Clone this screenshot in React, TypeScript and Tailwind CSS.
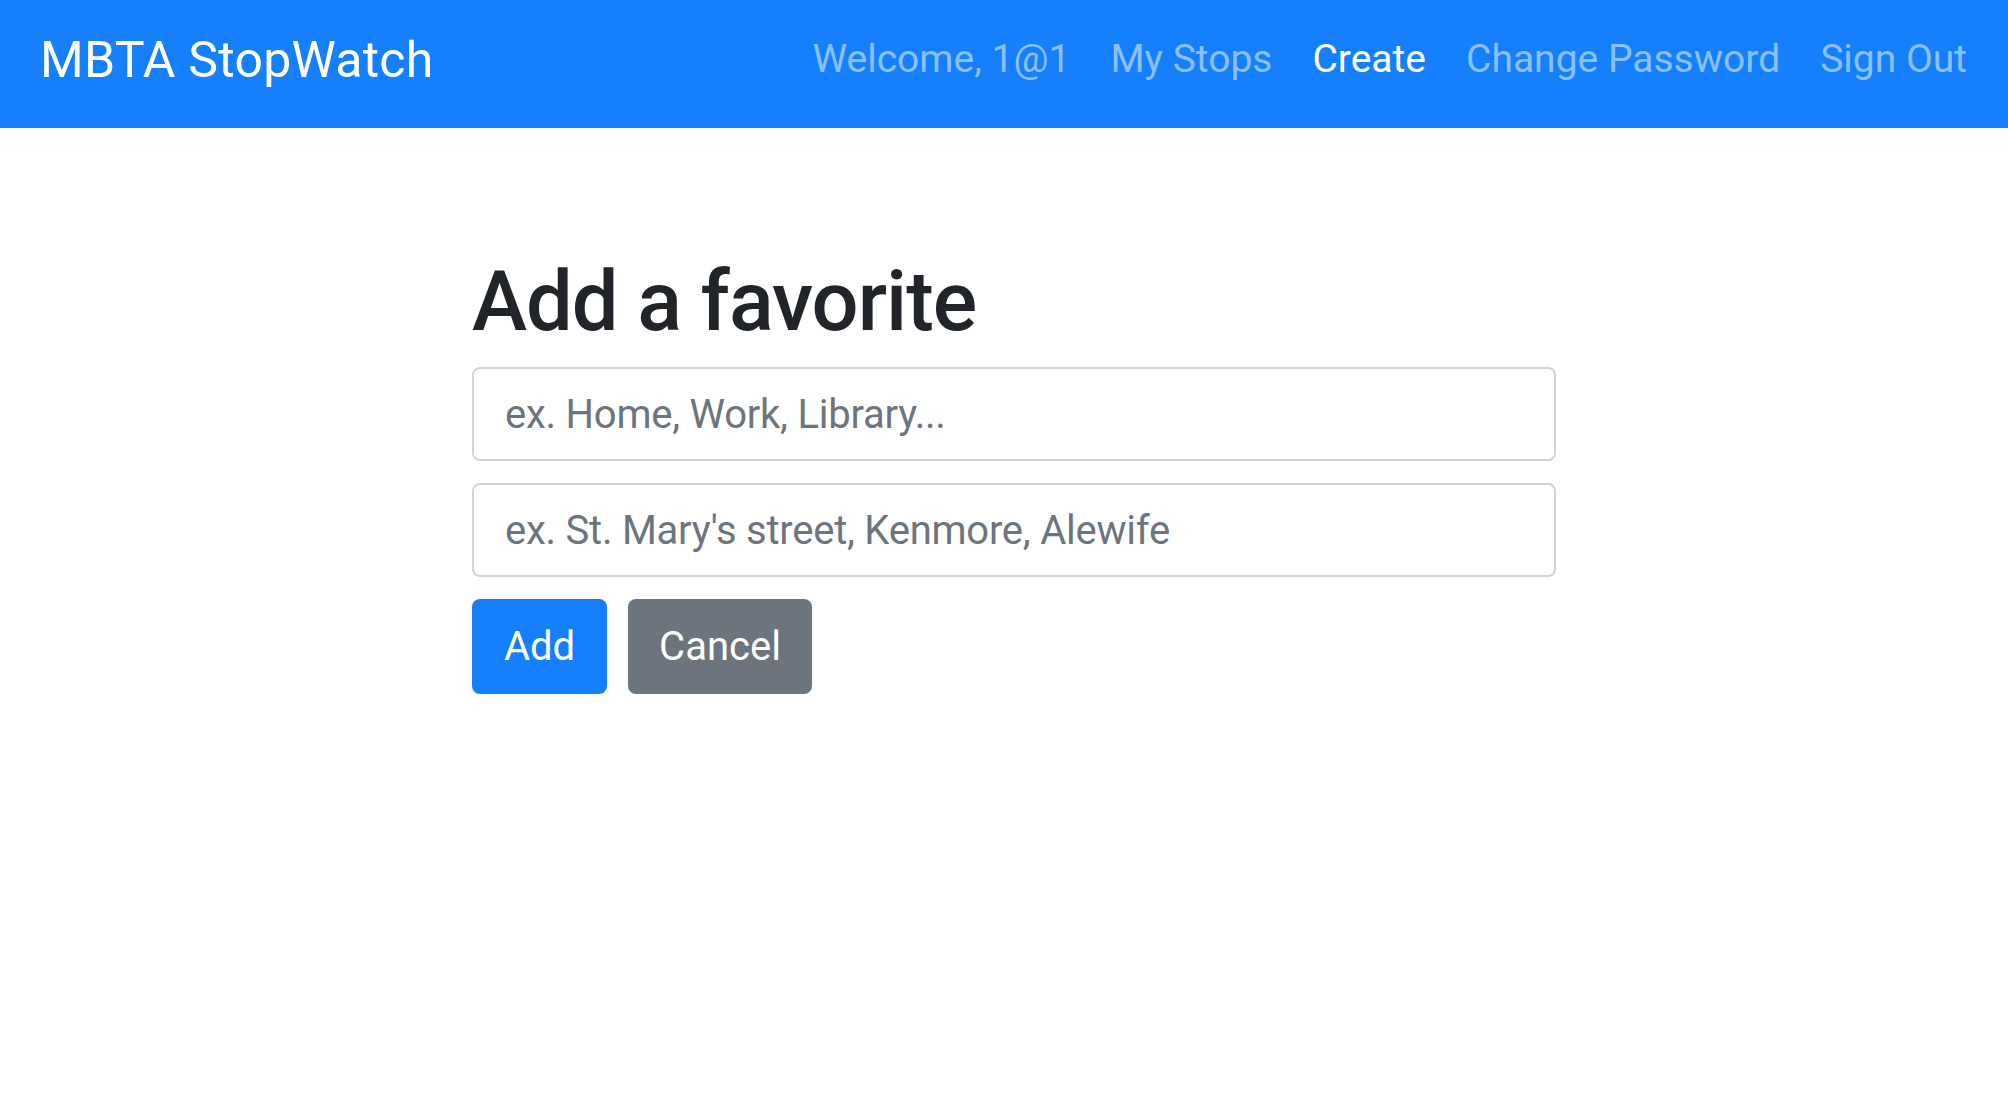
import { useState } from "react";

const links = [
  { label: "Welcome, 1@1", active: false },
  { label: "My Stops", active: false },
  { label: "Create", active: true },
  { label: "Change Password", active: false },
  { label: "Sign Out", active: false },
];

const App: React.FC = () => {
  const [form, setForm] = useState({ name: "", stop: "" });

  const handleChange = (e: React.ChangeEvent<HTMLInputElement>) => {
    const { name, value } = e.target;
    setForm({ ...form, [name]: value });
  };

  return (
    <div className="min-h-screen bg-white font-['Roboto',sans-serif]">
      <nav className="flex h-[128px] items-center justify-between bg-[#167ffc] pl-[40px] pr-[41px] pb-[9px]">
        <a className="text-[50px] leading-none tracking-[0.005em] text-white">MBTA StopWatch</a>
        <div className="flex gap-[40px] text-[39px] leading-none">
          {links.map((l) => (
            <a key={l.label} className={l.active ? "text-white" : "text-[#8bc0fe]"}>
              {l.label}
            </a>
          ))}
        </div>
      </nav>

      <main className="ml-[472px] w-[1084px] pt-[132px]">
        <h1 className="mb-[24px] text-[83px] font-medium leading-none tracking-[-0.012em] text-[#212529]">
          Add a favorite
        </h1>

        <input
          className="block h-[94px] w-full rounded-[8px] border-2 border-[#ced4da] px-[31px] text-[40px] tracking-[-0.006em] text-[#495057] outline-none placeholder:text-[#6c757d]"
          name="name"
          value={form.name}
          onChange={handleChange}
          placeholder="ex. Home, Work, Library..."
        />

        <input
          className="mt-[22px] block h-[94px] w-full rounded-[8px] border-2 border-[#ced4da] px-[31px] text-[40px] tracking-[-0.006em] text-[#495057] outline-none placeholder:text-[#6c757d]"
          name="stop"
          value={form.stop}
          onChange={handleChange}
          placeholder="ex. St. Mary's street, Kenmore, Alewife"
        />

        <div className="mt-[22px] flex gap-[21px]">
          <button className="h-[95px] w-[135px] rounded-[8px] bg-[#167ffc] text-[40px] text-white">Add</button>
          <button className="h-[95px] w-[184px] rounded-[8px] bg-[#6c757d] text-[40px] text-white">Cancel</button>
        </div>
      </main>
    </div>
  );
};

export default App;
